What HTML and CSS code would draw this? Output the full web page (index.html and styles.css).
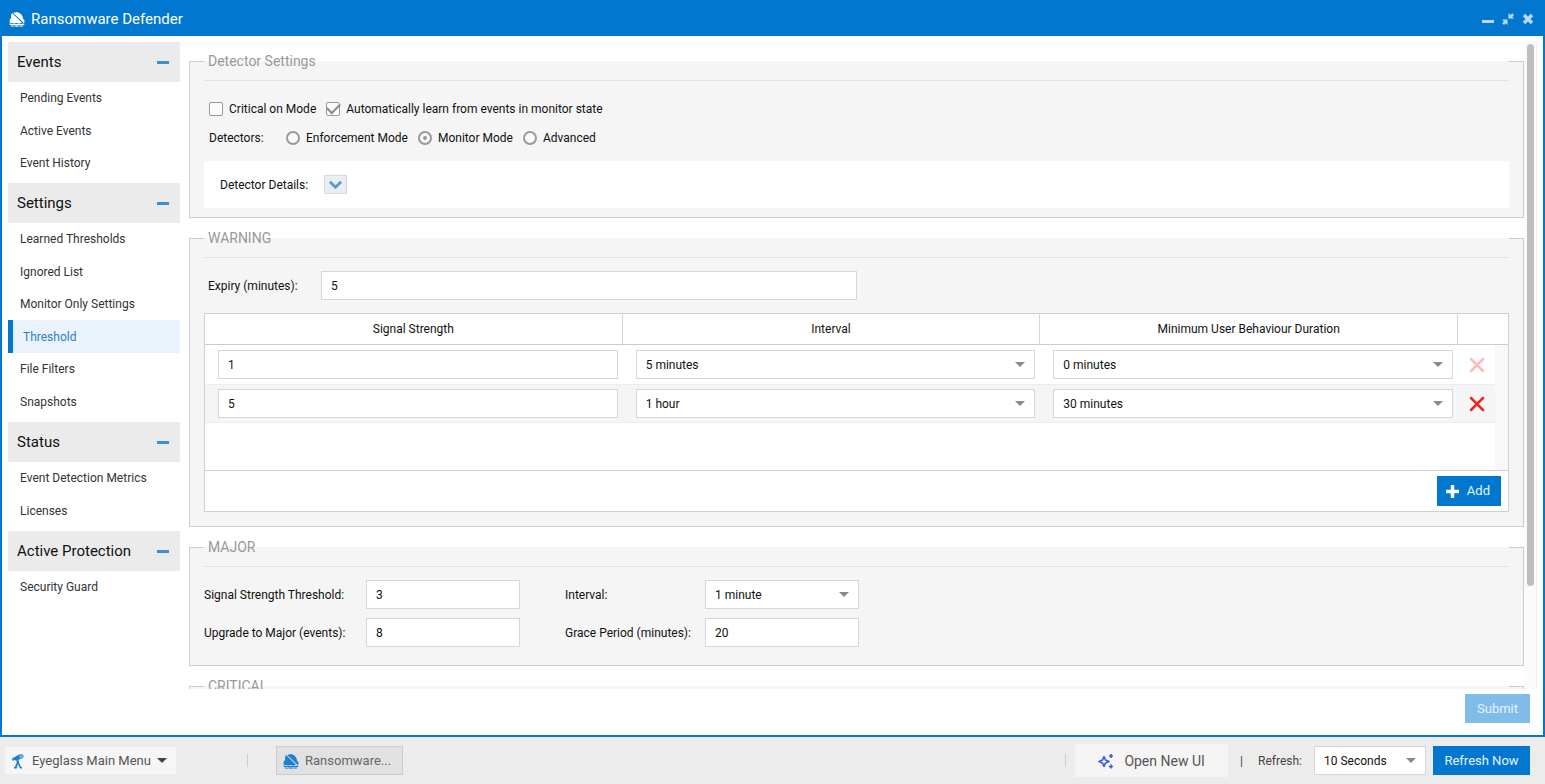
FILE: index.html
```html
<!DOCTYPE html>
<html lang="en">
<head>
<meta charset="utf-8">
<title>Ransomware Defender</title>
<link rel="stylesheet" href="styles.css">
</head>
<body>
<svg class="sprite" aria-hidden="true">
  <symbol id="helmet" viewBox="0 0 16 16">
    <path fill="currentColor" d="M3 2 13.200 12H1C0 9.500.800 8 2.300 7 1.800 5 2 3.500 3 2Z"/>
    <path fill="currentColor" d="M4.200 2C8.500-.2 13.800 2.500 14 7.800c1.600.8 1.800 2.400 1.200 4H14.500Z"/>
    <path fill="currentColor" d="M.500 12.300c1.500 1 3 1 4.500 0 1.500 1 3.500 1 5 0 1.500 1 3.500 1 5 0l.5 1.200c-1.800 1.300-3.500 1.300-5.200.3-1.800 1.100-3.500 1.100-5.300 0-1.500 1-2.800.9-4.500-.3z"/>
    <path fill="none" stroke="currentColor" stroke-width=".8" d="M2 15c1.200.6 2.200.6 3.500-.2 1.500.9 3 .9 4.800 0 1.200.7 2.400.8 3.700.2"/>
  </symbol>
</svg>
<main class="window">
  <header class="titlebar">
    <svg class="title-icon"><use href="#helmet"/></svg>
    <h1>Ransomware Defender</h1>
    <div class="window-tools">
      <button aria-label="Minimize"><svg viewBox="0 0 12 12"><path fill="currentColor" d="M0 7h12v3H0z"/></svg></button>
      <button aria-label="Restore"><svg viewBox="0 0 12 12"><path fill="currentColor" d="M6.500 0v5.500H12L10.300 3.800 12 2 10.200.2 8.300 1.900zM0 6.500h5.500V12L3.800 10.300 2 12 .2 10.200 1.900 8.300z"/></svg></button>
      <button aria-label="Close"><svg viewBox="0 0 12 12"><path stroke="currentColor" stroke-width="3.400" d="m2 2 8 8M10 2l-8 8"/></svg></button>
    </div>
  </header>
  <div class="window-body">
    <nav class="sidebar">
      <section>
        <h2><button class="group">Events<span class="minus"></span></button></h2>
        <ul><li><a href="#">Pending Events</a></li><li><a href="#">Active Events</a></li><li><a href="#">Event History</a></li></ul>
      </section>
      <section>
        <h2><button class="group">Settings<span class="minus"></span></button></h2>
        <ul><li><a href="#">Learned Thresholds</a></li><li><a href="#">Ignored List</a></li><li><a href="#">Monitor Only Settings</a></li><li><a href="#" class="active">Threshold</a></li><li><a href="#">File Filters</a></li><li><a href="#">Snapshots</a></li></ul>
      </section>
      <section>
        <h2><button class="group">Status<span class="minus"></span></button></h2>
        <ul><li><a href="#">Event Detection Metrics</a></li><li><a href="#">Licenses</a></li></ul>
      </section>
      <section>
        <h2><button class="group">Active Protection<span class="minus"></span></button></h2>
        <ul><li><a href="#">Security Guard</a></li></ul>
      </section>
    </nav>
    <div class="content">
      <div class="scroll-area">
        <form class="panels">
          <fieldset>
            <legend>Detector Settings</legend>
            <div class="fields detector">
              <div class="option-row">
                <label class="option"><input type="checkbox">Critical on Mode</label>
                <label class="option"><input type="checkbox" checked>Automatically learn from events in monitor state</label>
              </div>
              <div class="option-row" role="radiogroup" aria-labelledby="detectors">
                <span id="detectors" class="modes-label">Detectors:</span>
                <label class="option"><input type="radio" name="mode">Enforcement Mode</label>
                <label class="option"><input type="radio" name="mode" checked>Monitor Mode</label>
                <label class="option"><input type="radio" name="mode">Advanced</label>
              </div>
              <div class="details">
                <span id="details">Detector Details:</span>
                <button type="button" class="expand" aria-labelledby="details"><svg viewBox="0 0 16 12"><path fill="none" stroke="currentColor" stroke-width="3" d="m2 2.500 6 6 6-6"/></svg></button>
              </div>
            </div>
          </fieldset>
          <fieldset>
            <legend>WARNING</legend>
            <div class="fields warning">
              <div class="expiry"><label for="expiry">Expiry (minutes):</label><input id="expiry" type="text" value="5"></div>
              <div class="grid-box">
                <table>
                  <colgroup><col><col><col><col class="col-delete"><col class="col-gutter"></colgroup>
                  <thead><tr><th>Signal Strength</th><th>Interval</th><th>Minimum User Behaviour Duration</th><th colspan="2" aria-label="Remove"></th></tr></thead>
                  <tbody>
                    <tr>
                      <td><input type="text" value="1" aria-label="Signal Strength"></td>
                      <td><div class="select"><select aria-label="Interval"><option>5 minutes</option></select></div></td>
                      <td><div class="select"><select aria-label="Minimum User Behaviour Duration"><option>0 minutes</option></select></div></td>
                      <td class="delete-cell"><button type="button" class="delete" disabled aria-label="Remove row"><svg viewBox="0 0 16 16"><path stroke="currentColor" stroke-width="2.500" stroke-linecap="round" d="m2 2 12 12M14 2 2 14"/></svg></button></td>
                      <td class="gutter" rowspan="3"></td>
                    </tr>
                    <tr class="alt">
                      <td><input type="text" value="5" aria-label="Signal Strength"></td>
                      <td><div class="select"><select aria-label="Interval"><option>1 hour</option></select></div></td>
                      <td><div class="select"><select aria-label="Minimum User Behaviour Duration"><option>30 minutes</option></select></div></td>
                      <td class="delete-cell"><button type="button" class="delete" aria-label="Remove row"><svg viewBox="0 0 16 16"><path stroke="currentColor" stroke-width="2.500" stroke-linecap="round" d="m2 2 12 12M14 2 2 14"/></svg></button></td>
                    </tr>
                    <tr class="spacer"><td colspan="4"></td></tr>
                  </tbody>
                </table>
                <div class="grid-footer"><button type="button" class="primary add"><svg viewBox="0 0 12 12"><path stroke="currentColor" stroke-width="3.200" d="M6 0v12M0 6h12"/></svg>Add</button></div>
              </div>
            </div>
          </fieldset>
          <fieldset>
            <legend>MAJOR</legend>
            <div class="fields major">
              <label for="signal">Signal Strength Threshold:</label><input id="signal" type="text" value="3">
              <label for="interval" class="second">Interval:</label><div class="select"><select id="interval"><option>1 minute</option></select></div>
              <label for="upgrade">Upgrade to Major (events):</label><input id="upgrade" type="text" value="8">
              <label for="grace" class="second">Grace Period (minutes):</label><input id="grace" type="text" value="20">
            </div>
          </fieldset>
          <fieldset>
            <legend>CRITICAL</legend>
            <div class="fields"></div>
          </fieldset>
        </form>
        <div class="scrollbar"><div class="thumb"></div></div>
      </div>
      <div class="actions"><button class="primary" disabled>Submit</button></div>
    </div>
  </div>
</main>
<footer class="taskbar">
  <button class="main-menu">
    <svg viewBox="0 0 16 16"><path fill="#1c7fd0" d="M2 5.500 10 1l2.300 4L6 8 5 6.800 2.600 8zM6.500 8l2.300-1L9 9.500l2 4.500h1v1.500h-2L8 11l-1.500 4.500H4V14h.8L6.700 10z"/><circle cx="11.500" cy="3.300" r="2.300" fill="#64aee4"/></svg>
    Eyeglass Main Menu<span class="caret"></span>
  </button>
  <span class="divider divider-tasks"></span>
  <button class="task"><svg><use href="#helmet"/></svg>Ransomware...</button>
  <span class="divider divider-tools"></span>
  <button class="new-ui">
    <svg viewBox="0 0 16 16"><path fill="none" stroke="#3b5bdb" stroke-width="1.600" stroke-linejoin="round" d="M6 3.500 7.500 7 11 8.500 7.500 10 6 13.500 4.500 10 1 8.500 4.500 7z"/><path stroke="#3b5bdb" stroke-width="1.600" d="M13 1v4M11 3h4M13 11.500v4M11 13.500h4"/></svg>
    Open New UI
  </button>
  <span class="pipe">|</span>
  <label for="refresh">Refresh:</label>
  <div class="select refresh"><select id="refresh"><option>10 Seconds</option></select></div>
  <button class="primary refresh-now">Refresh Now</button>
</footer>
</body>
</html>
```
FILE: styles.css
```css
* { box-sizing: border-box; }
body {
  margin: 0;
  height: 100vh;
  display: flex;
  flex-direction: column;
  overflow: hidden;
  background: #ececec;
  color: #111;
  font: 12px/16px Roboto, "Liberation Sans", sans-serif;
}
button, input, select { font: inherit; color: inherit; }
button { border: 0; padding: 0; background: none; }
h1, h2, ul { margin: 0; padding: 0; font-weight: 400; }
ul { list-style: none; }
a { color: inherit; text-decoration: none; }
svg { display: block; }
.sprite { display: none; }

/* Window frame */
.window {
  flex: 1;
  min-height: 0;
  display: flex;
  flex-direction: column;
  border: 2px solid #0277d0;
  background: #fff;
}
.titlebar {
  display: flex;
  align-items: center;
  height: 34px;
  padding: 0 9px 0 7px;
  background: #0277d0;
  color: #fff;
}
.titlebar h1 { margin-left: 6px; font-size: 15px; line-height: 20px; }
.title-icon { width: 16px; height: 16px; }
.window-tools { display: flex; gap: 8px; margin-left: auto; color: #bcd9f1; }
.window-tools svg { width: 12px; height: 12px; }
.window-body {
  flex: 1;
  min-height: 0;
  display: flex;
  gap: 9px;
  padding: 6px 6px 0;
}

/* Navigation */
.sidebar { width: 172px; flex: none; color: #333; }
.sidebar section { margin-bottom: 4px; }
.group {
  display: flex;
  align-items: center;
  justify-content: space-between;
  width: 100%;
  height: 40px;
  padding: 0 11px 0 9px;
  background: #ebebeb;
  color: #111;
  font-size: 15px;
}
.minus { width: 12px; height: 3px; background: #3c8fd6; }
.sidebar a { display: flex; align-items: center; height: 32px; padding-left: 12px; }
.sidebar li:nth-child(even) a { height: 33px; }
.sidebar a.active {
  border-left: 5px solid #0277d0;
  padding-left: 10px;
  background: #eaf3fb;
  color: #2f7fc4;
}

/* Settings panels */
.content { flex: 1; min-width: 0; display: flex; flex-direction: column; }
.scroll-area { flex: 1; min-height: 0; display: flex; overflow: hidden; }
.panels { flex: 1; min-width: 0; padding-top: 9px; }
fieldset {
  min-width: 0;
  margin: 0 0 10px;
  padding: 0 14px;
  border: 1px solid #ccc;
  background: #f5f5f5;
}
legend {
  width: 100%;
  height: 21px;
  padding: 0 4px;
  color: #999;
  font-size: 14px;
  line-height: 21px;
}
.fields { margin-top: 8px; border-top: 1px solid #e2e2e2; }
.detector { padding: 13px 0 9px; }
.option-row { display: flex; align-items: center; gap: 10px; height: 29px; padding-left: 5px; }
.modes-label { width: 67px; }
.option { display: flex; align-items: center; gap: 6px; }
.option input {
  appearance: none;
  display: grid;
  place-items: center;
  width: 14px;
  height: 14px;
  margin: 0;
  border: 1px solid #999;
  border-radius: 2px;
  background: #fafafa;
}
.option input[type="checkbox"]:checked::before {
  content: "";
  width: 11px;
  height: 6px;
  margin-bottom: 4px;
  border: solid #8c8c8c;
  border-width: 0 0 2px 2px;
  transform: rotate(-45deg);
}
.option input[type="radio"] { border-width: 2px; border-radius: 50%; }
.option input[type="radio"]:checked::before {
  content: "";
  width: 4px;
  height: 4px;
  border-radius: 50%;
  background: #999;
}
.details {
  display: flex;
  align-items: center;
  gap: 16px;
  height: 47px;
  margin-top: 9px;
  padding-left: 16px;
  background: #fff;
}
.expand {
  display: grid;
  place-items: center;
  width: 23px;
  height: 19px;
  border: 1px solid #dadada;
  background: #eaeef2;
  color: #5a9bd3;
}
.expand svg { width: 15px; height: 12px; }

/* Form controls */
input[type="text"], select {
  display: block;
  width: 100%;
  height: 29px;
  margin: 0;
  padding: 0 9px;
  border: 1px solid #d6d6d6;
  border-radius: 0;
  background: #fff;
}
select { appearance: none; }
.select { position: relative; }
.select::after, .caret {
  content: "";
  border: solid transparent;
  border-width: 5px 5px 0;
  border-top-color: #8a8a8a;
}
.select::after {
  position: absolute;
  top: 12px;
  right: 10px;
  pointer-events: none;
}
.warning { padding: 13px 0 14px; }
.expiry {
  display: grid;
  grid-template-columns: 113px 37fr 45fr;
  align-items: center;
  margin-bottom: 13px;
  padding-left: 4px;
}

/* Threshold table */
.grid-box { border: 1px solid #d0d0d0; background: #fff; }
table { width: 100%; table-layout: fixed; border-collapse: separate; border-spacing: 0; }
th {
  height: 31px;
  padding: 0;
  border-right: 1px solid #d6d6d6;
  border-bottom: 1px solid #ccc;
  font-weight: 400;
}
th:last-child { border-right: 0; }
td { height: 39px; padding: 0 5px 0 13px; }
.col-delete { width: 37px; }
.col-gutter { width: 13px; }
.alt td { background: #f5f5f5; border: solid #ededed; border-width: 1px 0; }
.spacer td { height: 47px; }
td.gutter { padding: 0; background: #f8f8f8; }
td.delete-cell { padding: 0; }
.delete { display: block; margin: 0 auto; color: #ee2424; }
.delete svg { width: 16px; height: 16px; }
.delete:disabled { color: #fbbaba; }
.grid-footer { display: flex; justify-content: flex-end; padding: 5px 7px; border-top: 1px solid #d0d0d0; }
.primary { height: 30px; background: #0277d0; color: #e6f3ff; font-size: 13px; }
.primary:disabled { background: #81bbe8; }
.add { display: flex; align-items: center; gap: 8px; padding: 0 11px 0 9px; }
.add svg { width: 13px; height: 13px; color: #fff; }

.major {
  display: grid;
  grid-template-columns: 162px 154px 185px 154px;
  align-items: center;
  row-gap: 9px;
  padding: 13px 0 18px;
}
.second { padding-left: 45px; }

.scrollbar { width: 13px; padding: 2px 6px 0 3px; border-right: 1px solid #eef; background: #fbfbfb; }
.thumb { width: 7px; height: 84%; border-radius: 4px; background: #bebebe; }
.actions { display: flex; justify-content: flex-end; height: 46px; padding: 5px 7px 0 0; }
.actions .primary { width: 65px; height: 29px; }

/* Bottom bar */
.taskbar { display: flex; align-items: center; height: 47px; padding: 0 15px 0 5px; color: #444; }
.taskbar svg { flex: none; width: 16px; height: 16px; }
.main-menu {
  display: flex;
  align-items: center;
  gap: 6px;
  width: 171px;
  height: 27px;
  padding-left: 5px;
  background: #f6f6f6;
  color: #555;
  font-size: 13px;
}
.caret { border-top-color: #444; }
.divider { width: 1px; height: 13px; background: #ccc; }
.divider-tasks { margin: 0 28px 0 71px; }
.divider-tools { margin: 0 9px 0 auto; }
.task {
  display: flex;
  align-items: center;
  gap: 6px;
  width: 127px;
  height: 29px;
  padding-left: 6px;
  border: 1px solid #ccc;
  background: #e1e1e1;
  color: #666;
  font-size: 13px;
}
.task svg { color: #1c7fd0; }
.new-ui {
  display: flex;
  align-items: center;
  justify-content: center;
  gap: 10px;
  width: 153px;
  height: 33px;
  background: #f5f5f5;
  color: #555;
  font-size: 14px;
}
.pipe { margin: 0 15px 0 12px; }
.refresh { width: 112px; margin: 0 7px 0 12px; color: #111; }
.refresh-now { width: 97px; height: 29px; }
```
